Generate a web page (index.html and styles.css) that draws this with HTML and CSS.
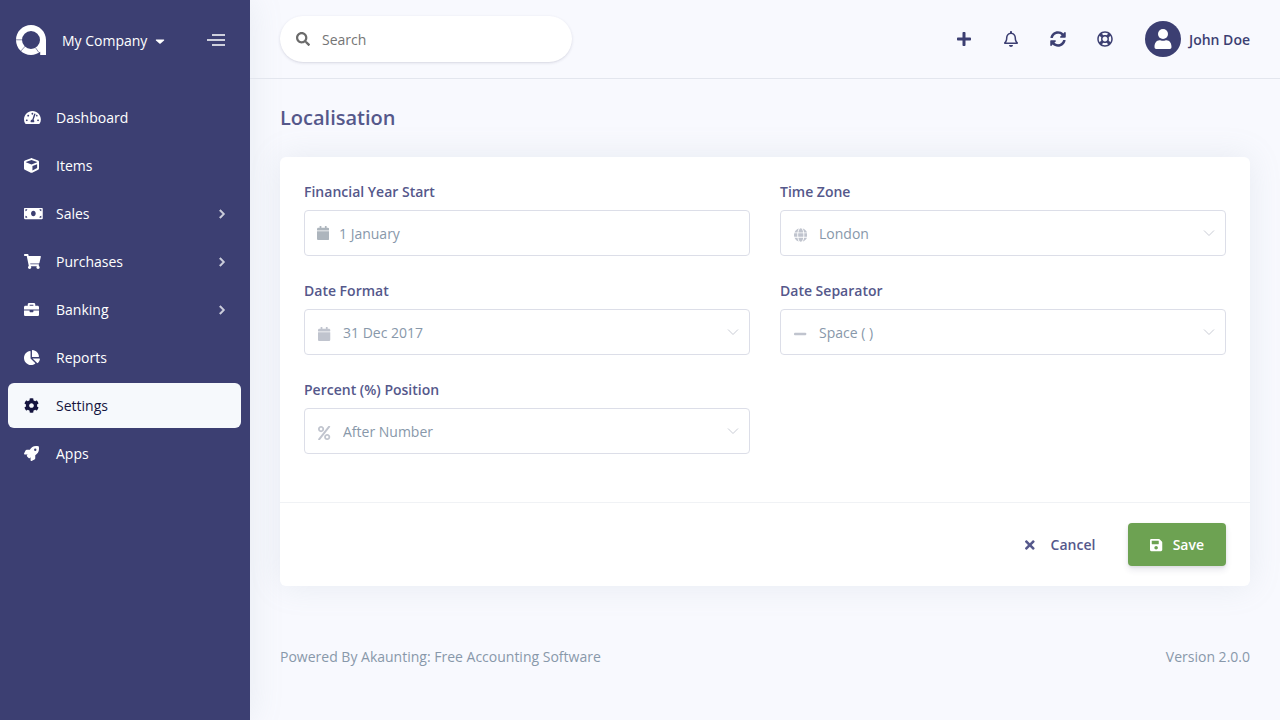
FILE: index.html
```html
<!DOCTYPE html>
<html lang="en-GB">
<head>
<meta charset="utf-8">
<meta name="viewport" content="width=device-width, initial-scale=1">
<title>Localisation</title>
<link rel="stylesheet" href="styles.css">
</head>
<body>
<div class="app">
  <aside class="sidebar">
    <div class="brand">
      <svg class="brand-logo" viewBox="0 0 30 30" aria-hidden="true">
        <path class="logo-fill" d="M15 0C6.700 0 0 6.700 0 15s6.700 15 15 15c3.500 0 6.700-1.200 9.200-3.200V30H30V15C30 6.700 23.300 0 15 0zm0 6a9 9 0 1 1 0 18 9 9 0 0 1 0-18z"/>
        <path class="logo-cut" d="M0 14.800h6M5 25.900l4.200-4.700M19.400 22.600l3.400 4.800"/>
      </svg>
      <button class="company" type="button">My Company
        <svg class="caret" viewBox="0 0 10 6" aria-hidden="true"><path d="M1.200 1.500h7.600q.8.300.2 1L5.600 5.600q-.6.500-1.200 0L1 2.500q-.6-.7.200-1z"/></svg>
      </button>
      <button class="toggler" type="button" aria-label="Toggle menu"><span class="bar bar-short"></span><span class="bar"></span><span class="bar bar-short"></span></button>
    </div>
    <nav class="menu">
      <a class="menu-item" href="#"><span class="menu-icon"><svg class="icon" viewBox="0 0 576 512"><path d="M288 32C128.940 32 0 160.940 0 320c0 52.800 14.250 102.260 39.060 144.800 5.610 9.620 16.300 15.200 27.440 15.200h443c11.140 0 21.830-5.580 27.440-15.200C561.750 422.260 576 372.800 576 320c0-159.060-128.940-288-288-288zm0 64c14.710 0 26.580 10.130 30.320 23.650-1.110 2.260-2.640 4.230-3.450 6.670l-9.220 27.670c-5.130 3.490-10.970 6.010-17.640 6.010-17.670 0-32-14.330-32-32S270.330 96 288 96zM96 384c-17.670 0-32-14.330-32-32s14.330-32 32-32 32 14.330 32 32-14.330 32-32 32zm48-160c-17.670 0-32-14.330-32-32s14.330-32 32-32 32 14.330 32 32-14.330 32-32 32zm246.770-72.410l-61.330 184C343.130 347.330 352 364.540 352 384c0 11.720-3.380 22.550-8.880 32H232.880c-5.500-9.450-8.880-20.280-8.880-32 0-33.940 26.500-61.430 59.900-63.590l61.340-184.010c4.170-12.560 17.730-19.450 30.360-15.170 12.570 4.190 19.350 17.790 15.170 30.360zm14.660 57.200l15.520-46.550c3.470-1.290 7.130-2.230 11.050-2.230 17.670 0 32 14.330 32 32s-14.330 32-32 32c-11.380-.01-20.890-6.280-26.570-15.220zM480 384c-17.670 0-32-14.330-32-32s14.330-32 32-32 32 14.330 32 32-14.330 32-32 32z"/></svg></span><span class="menu-label">Dashboard</span></a>
      <a class="menu-item" href="#"><span class="menu-icon"><svg class="icon" viewBox="0 0 512 512"><path d="M239.100 6.300l-208 78c-18.700 7-31.100 25-31.100 45v225.100c0 18.200 10.300 34.800 26.500 42.900l208 104c13.500 6.800 29.400 6.800 42.900 0l208-104c16.300-8.100 26.500-24.800 26.500-42.900V129.300c0-20-12.400-37.900-31.100-44.900l-208-78C262 2.200 250 2.200 239.100 6.300zM256 68.400l192 72v1.100l-192 78-192-78v-1.100l192-72zm32 356V275.500l160-65v133.900l-160 80z"/></svg></span><span class="menu-label">Items</span></a>
      <a class="menu-item" href="#"><span class="menu-icon"><svg class="icon" viewBox="0 0 640 512"><path d="M608 64H32C14.330 64 0 78.330 0 96v320c0 17.670 14.330 32 32 32h576c17.670 0 32-14.330 32-32V96c0-17.670-14.330-32-32-32zM48 400v-64c35.350 0 64 28.650 64 64H48zm0-224v-64h64c0 35.350-28.650 64-64 64zm272 176c-44.190 0-80-42.990-80-96 0-53.020 35.820-96 80-96s80 42.980 80 96c0 53.030-35.830 96-80 96zm272 48h-64c0-35.350 28.650-64 64-64v64zm0-224c-35.350 0-64-28.650-64-64h64v64z"/></svg></span><span class="menu-label">Sales</span><svg class="chevron" viewBox="0 0 320 512"><use href="#i-right"/></svg></a>
      <a class="menu-item" href="#"><span class="menu-icon"><svg class="icon" viewBox="0 0 576 512"><path d="M528.120 301.319l47.273-208C578.806 78.301 567.391 64 551.990 64H159.208l-9.166-44.810C147.758 8.021 137.930 0 126.529 0H24C10.745 0 0 10.745 0 24v16c0 13.255 10.745 24 24 24h69.883l70.248 343.435C147.325 417.100 136 435.222 136 456c0 30.928 25.072 56 56 56s56-25.072 56-56c0-15.674-6.447-29.835-16.824-40h209.647C430.447 426.165 424 440.326 424 456c0 30.928 25.072 56 56 56s56-25.072 56-56c0-22.172-12.888-41.332-31.579-50.405l5.517-24.276c3.413-15.018-8.002-29.319-23.403-29.319H218.117l-6.545-32h293.145c11.206 0 20.920-7.754 23.403-18.681z"/></svg></span><span class="menu-label">Purchases</span><svg class="chevron" viewBox="0 0 320 512"><use href="#i-right"/></svg></a>
      <a class="menu-item" href="#"><span class="menu-icon"><svg class="icon" viewBox="0 0 512 512"><path d="M320 336c0 8.840-7.160 16-16 16h-96c-8.840 0-16-7.160-16-16v-48H0v144c0 25.600 22.400 48 48 48h416c25.600 0 48-22.400 48-48V288H320v48zm144-208h-80V80c0-25.600-22.400-48-48-48H176c-25.600 0-48 22.400-48 48v48H48c-25.600 0-48 22.400-48 48v80h512v-80c0-25.600-22.400-48-48-48zm-144 0H192V96h128v32z"/></svg></span><span class="menu-label">Banking</span><svg class="chevron" viewBox="0 0 320 512"><use href="#i-right"/></svg></a>
      <a class="menu-item" href="#"><span class="menu-icon"><svg class="icon" viewBox="0 0 544 512"><path d="M527.790 288H290.500l158.030 158.030c6.040 6.040 15.980 6.530 22.190.68 38.700-36.460 65.320-85.610 73.130-140.860 1.340-9.460-6.510-17.850-16.060-17.850zm-15.830-64.800C503.720 103.740 408.260 8.280 288.800.04 279.680-.59 272 7.100 272 16.240V240h223.770c9.140 0 16.820-7.680 16.190-16.800zM224 288V50.710c0-9.550-8.390-17.400-17.840-16.060C86.990 51.490-4.100 155.600.14 280.370 4.500 408.510 114.830 513.590 243.030 511.980c50.400-.63 96.970-16.870 135.260-44.030 7.900-5.600 8.420-17.230 1.570-24.080L224 288z"/></svg></span><span class="menu-label">Reports</span></a>
      <a class="menu-item menu-item-active" href="#" aria-current="page"><span class="menu-icon"><svg class="icon" viewBox="0 0 512 512"><path d="M487.400 315.700l-42.600-24.600c4.300-23.200 4.300-47 0-70.200l42.600-24.600c4.900-2.800 7.100-8.600 5.500-14-11.100-35.600-30-67.800-54.700-94.600-3.800-4.100-10-5.100-14.800-2.300L380.800 110c-17.900-15.400-38.500-27.300-60.800-35.100V25.800c0-5.600-3.900-10.500-9.400-11.700-36.700-8.200-74.300-7.800-109.200 0-5.500 1.200-9.400 6.100-9.400 11.700V75c-22.200 7.900-42.800 19.800-60.800 35.100L88.700 85.500c-4.900-2.800-11-1.900-14.800 2.300-24.700 26.700-43.600 58.900-54.700 94.600-1.700 5.400.6 11.200 5.500 14L67.300 221c-4.300 23.200-4.300 47 0 70.200l-42.600 24.600c-4.900 2.800-7.100 8.600-5.500 14 11.100 35.600 30 67.800 54.700 94.600 3.800 4.100 10 5.100 14.800 2.300l42.600-24.600c17.900 15.400 38.500 27.300 60.800 35.100v49.200c0 5.600 3.900 10.500 9.400 11.700 36.700 8.200 74.300 7.800 109.200 0 5.500-1.200 9.400-6.100 9.400-11.700v-49.200c22.200-7.900 42.800-19.800 60.800-35.100l42.600 24.600c4.900 2.800 11 1.900 14.800-2.300 24.700-26.700 43.600-58.900 54.700-94.600 1.500-5.500-.7-11.300-5.600-14.100zM256 336c-44.100 0-80-35.900-80-80s35.900-80 80-80 80 35.900 80 80-35.900 80-80 80z"/></svg></span><span class="menu-label">Settings</span></a>
      <a class="menu-item" href="#"><span class="menu-icon"><svg class="icon" viewBox="0 0 512 512"><path d="M505.120 19.094c-1.189-5.531-6.658-11-12.207-12.188C460.716 0 435.507 0 410.407 0 307.175 0 245.269 55.203 199.052 128H94.838c-16.348.016-35.557 11.875-42.887 26.484L2.516 253.297A28.400 28.400 0 0 0 0 264a24.009 24.009 0 0 0 24.006 24h103.810l-22.474 22.469c-11.365 11.361-12.996 32.258 0 45.250l50.904 50.906c11.156 11.188 32.156 13.156 45.277 0l22.475-22.469V488a24.009 24.009 0 0 0 24.006 24 28.559 28.559 0 0 0 10.707-2.516l98.728-49.390c14.629-7.297 26.508-26.500 26.508-42.860V312.797c72.598-46.313 128.035-108.406 128.035-211.094C512.075 76.500 512.075 51.297 505.120 19.094zM384.040 168A40 40 0 1 1 424.050 128a40.023 40.023 0 0 1-40.010 40z"/></svg></span><span class="menu-label">Apps</span></a>
    </nav>
  </aside>

  <div class="main">
    <header class="topbar">
      <label class="search">
        <svg class="icon search-icon" viewBox="0 0 512 512" aria-hidden="true"><path d="M505 442.700L405.300 343c-4.500-4.500-10.600-7-17-7H372c27.600-35.300 44-79.700 44-128C416 93.100 322.900 0 208 0S0 93.100 0 208s93.100 208 208 208c48.300 0 92.700-16.400 128-44v16.300c0 6.400 2.500 12.500 7 17l99.700 99.700c9.400 9.400 24.600 9.400 33.900 0l28.300-28.300c9.400-9.400 9.400-24.600.1-34zM208 336c-70.700 0-128-57.200-128-128 0-70.700 57.200-128 128-128 70.700 0 128 57.200 128 128 0 70.700-57.200 128-128 128z"/></svg>
        <input class="search-input" type="text" placeholder="Search" aria-label="Search">
      </label>
      <div class="tools">
        <button class="tool" type="button" aria-label="Add"><svg class="icon tool-icon" viewBox="0 0 448 512"><path d="M416 208H272V64c0-17.670-14.330-32-32-32h-32c-17.670 0-32 14.330-32 32v144H32c-17.670 0-32 14.330-32 32v32c0 17.670 14.330 32 32 32h144v144c0 17.670 14.330 32 32 32h32c17.670 0 32-14.330 32-32V304h144c17.670 0 32-14.330 32-32v-32c0-17.670-14.330-32-32-32z"/></svg></button>
        <button class="tool" type="button" aria-label="Notifications"><svg class="icon tool-icon" viewBox="0 0 448 512"><path d="M439.390 362.290c-19.320-20.760-55.470-51.990-55.470-154.290 0-77.700-54.480-139.900-127.940-155.160V32c0-17.670-14.320-32-31.980-32s-31.980 14.330-31.980 32v20.840C118.560 68.100 64.080 130.300 64.080 208c0 102.300-36.150 133.530-55.470 154.290-6 6.450-8.660 14.160-8.610 21.710.11 16.400 12.980 32 32.100 32h383.800c19.120 0 32-15.600 32.100-32 .05-7.550-2.610-15.270-8.610-21.710zM67.530 368c21.220-27.970 44.420-74.330 44.530-159.420 0-.2-.06-.38-.06-.58 0-61.860 50.140-112 112-112s112 50.140 112 112c0 .2-.06.380-.06.580.11 85.100 23.310 131.460 44.530 159.420H67.530zM224 512c35.320 0 63.970-28.650 63.970-64H160.030c0 35.350 28.650 64 63.970 64z"/></svg></button>
        <button class="tool" type="button" aria-label="Updates"><svg class="icon tool-icon" viewBox="0 0 512 512"><path d="M370.720 133.280C339.458 104.008 298.888 87.962 255.848 88c-77.458.068-144.328 53.178-162.791 126.850-1.344 5.363-6.122 9.150-11.651 9.150H24.103c-7.498 0-13.194-6.807-11.807-14.176C33.933 94.924 134.813 8 256 8c66.448 0 126.791 26.136 171.315 68.685L463.030 40.970C478.149 25.851 504 36.559 504 57.941V192c0 13.255-10.745 24-24 24H345.941c-21.382 0-32.090-25.851-16.971-40.971l41.750-41.749zM32 296h134.059c21.382 0 32.090 25.851 16.971 40.971l-41.750 41.750c31.262 29.273 71.835 45.319 114.876 45.280 77.418-.07 144.315-53.144 162.787-126.849 1.344-5.363 6.122-9.150 11.651-9.150h57.304c7.498 0 13.194 6.807 11.807 14.176C478.067 417.076 377.187 504 256 504c-66.448 0-126.791-26.136-171.315-68.685L48.970 471.030C33.851 486.149 8 475.441 8 454.059V320c0-13.255 10.745-24 24-24z"/></svg></button>
        <button class="tool" type="button" aria-label="Help"><svg class="icon tool-icon" viewBox="0 0 512 512"><path d="M256 504c136.967 0 248-111.033 248-248S392.967 8 256 8 8 119.033 8 256s111.033 248 248 248zm-103.398-76.720l53.411-53.411c31.806 13.506 68.128 13.522 99.974 0l53.411 53.411c-63.217 38.319-143.579 38.319-206.796 0zM336 256c0 44.112-35.888 80-80 80s-80-35.888-80-80 35.888-80 80-80 80 35.888 80 80zm91.280 103.398l-53.411-53.411c13.505-31.806 13.522-68.128 0-99.974l53.411-53.411c38.319 63.217 38.319 143.579 0 206.796zM359.397 84.720l-53.411 53.411c-31.806-13.505-68.128-13.522-99.973 0L152.602 84.720c63.217-38.319 143.579-38.319 206.795 0zM84.720 152.602l53.411 53.411c-13.506 31.806-13.522 68.128 0 99.974L84.720 359.398c-38.319-63.217-38.319-143.579 0-206.796z"/></svg></button>
        <button class="user" type="button">
          <svg class="avatar" viewBox="0 0 36 36" aria-hidden="true"><circle class="avatar-bg" cx="18" cy="18" r="18"/><circle class="avatar-fg" cx="18" cy="13" r="5"/><path class="avatar-fg" d="M9.500 26c0-3.900 2-6.700 5-6.700 1 0 1.800.5 3.500.5s2.500-.5 3.500-.5c3 0 5 2.800 5 6.700 0 1.300-.7 2-1.700 2H11.200c-1 0-1.700-.7-1.700-2z"/></svg>
          John Doe
        </button>
      </div>
    </header>

    <main class="content">
      <h1 class="title">Localisation</h1>
      <form class="card">
        <div class="fields">
          <div class="field">
            <label class="label" for="year">Financial Year Start</label>
            <div class="control control-date">
              <svg class="icon control-icon" viewBox="0 0 448 512" aria-hidden="true"><use href="#i-calendar"/></svg>
              <input class="input" id="year" type="text" value="1 January">
            </div>
          </div>
          <div class="field">
            <label class="label" for="zone">Time Zone</label>
            <div class="control">
              <svg class="icon control-icon" viewBox="0 0 496 512" aria-hidden="true"><path d="M336.500 160C322 70.700 287.800 8 248 8s-74 62.700-88.500 152h177zM152 256c0 22.200 1.200 43.500 3.300 64h185.300c2.100-20.500 3.300-41.800 3.300-64s-1.200-43.500-3.300-64H155.300c-2.100 20.500-3.300 41.800-3.300 64zm324.700-96c-28.600-67.900-86.500-120.400-158-141.600 24.400 33.800 41.200 84.700 50 141.600h108zM177.200 18.400C105.800 39.600 47.800 92.100 19.300 160h108c8.700-56.900 25.500-107.800 49.900-141.600zM487.400 192H372.700c2.100 21 3.300 42.500 3.300 64s-1.200 43-3.300 64h114.600c5.500-20.500 8.600-41.800 8.600-64s-3.100-43.500-8.500-64zM120 256c0-21.500 1.200-43 3.300-64H8.600C3.200 212.500 0 233.800 0 256s3.200 43.500 8.600 64h114.600c-2-21-3.200-42.500-3.200-64zm39.500 96c14.500 89.300 48.700 152 88.500 152s74-62.700 88.500-152h-177zm159.300 141.600c71.400-21.200 129.400-73.700 158-141.600h-108c-8.800 56.900-25.600 107.800-50 141.600zM19.300 352c28.600 67.900 86.500 120.400 158 141.600-24.400-33.800-41.200-84.700-50-141.600h-108z"/></svg>
              <select class="input select" id="zone"><option>London</option></select>
              <svg class="down" viewBox="0 0 12 8" aria-hidden="true"><use href="#i-down"/></svg>
            </div>
          </div>
          <div class="field">
            <label class="label" for="format">Date Format</label>
            <div class="control">
              <svg class="icon control-icon" viewBox="0 0 448 512" aria-hidden="true"><use href="#i-calendar"/></svg>
              <select class="input select" id="format"><option>31 Dec 2017</option></select>
              <svg class="down" viewBox="0 0 12 8" aria-hidden="true"><use href="#i-down"/></svg>
            </div>
          </div>
          <div class="field">
            <label class="label" for="separator">Date Separator</label>
            <div class="control">
              <svg class="icon control-icon" viewBox="0 0 448 512" aria-hidden="true"><path d="M416 208H32c-17.670 0-32 14.330-32 32v32c0 17.670 14.330 32 32 32h384c17.670 0 32-14.330 32-32v-32c0-17.670-14.330-32-32-32z"/></svg>
              <select class="input select" id="separator"><option>Space ( )</option></select>
              <svg class="down" viewBox="0 0 12 8" aria-hidden="true"><use href="#i-down"/></svg>
            </div>
          </div>
          <div class="field">
            <label class="label" for="percent">Percent (%) Position</label>
            <div class="control">
              <svg class="icon control-icon" viewBox="0 0 448 512" aria-hidden="true"><path d="M112 224c61.900 0 112-50.100 112-112S173.900 0 112 0 0 50.100 0 112s50.100 112 112 112zm0-160c26.500 0 48 21.500 48 48s-21.500 48-48 48-48-21.500-48-48 21.500-48 48-48zm224 224c-61.900 0-112 50.100-112 112s50.100 112 112 112 112-50.100 112-112-50.100-112-112-112zm0 160c-26.500 0-48-21.500-48-48s21.500-48 48-48 48 21.500 48 48-21.500 48-48 48zM392.300.2l31.600-.1c19.400-.1 30.900 21.800 19.700 37.800L77.400 501.600a23.950 23.950 0 0 1-19.600 10.200l-33.400.1c-19.500 0-30.900-21.900-19.700-37.800l368-463.700C377.200 4 384.500.2 392.300.2z"/></svg>
              <select class="input select" id="percent"><option>After Number</option></select>
              <svg class="down" viewBox="0 0 12 8" aria-hidden="true"><use href="#i-down"/></svg>
            </div>
          </div>
        </div>
        <div class="actions">
          <button class="btn btn-cancel" type="button"><svg class="icon btn-icon" viewBox="0 0 352 512" aria-hidden="true"><path d="M242.720 256l100.070-100.070c12.280-12.280 12.280-32.190 0-44.480l-22.240-22.240c-12.280-12.280-32.190-12.280-44.480 0L176 189.280 75.930 89.210c-12.280-12.280-32.190-12.280-44.480 0L9.210 111.450c-12.280 12.280-12.280 32.190 0 44.480L109.280 256 9.210 356.070c-12.280 12.280-12.280 32.190 0 44.480l22.240 22.240c12.280 12.280 32.200 12.280 44.480 0L176 322.720l100.070 100.070c12.280 12.280 32.200 12.280 44.480 0l22.240-22.240c12.280-12.280 12.280-32.190 0-44.480L242.720 256z"/></svg>Cancel</button>
          <button class="btn btn-save" type="submit"><svg class="icon btn-icon" viewBox="0 0 448 512" aria-hidden="true"><path d="M433.941 129.941l-83.882-83.882A48 48 0 0 0 316.118 32H48C21.490 32 0 53.490 0 80v352c0 26.510 21.490 48 48 48h352c26.510 0 48-21.490 48-48V163.882a48 48 0 0 0-14.059-33.941zM224 416c-35.346 0-64-28.654-64-64 0-35.346 28.654-64 64-64s64 28.654 64 64c0 35.346-28.654 64-64 64zm96-304.520V212c0 6.627-5.373 12-12 12H76c-6.627 0-12-5.373-12-12V108c0-6.627 5.373-12 12-12h228.520c3.183 0 6.235 1.264 8.485 3.515l3.480 3.480A11.996 11.996 0 0 1 320 111.480z"/></svg>Save</button>
        </div>
      </form>
      <footer class="footer">
        <span>Powered By Akaunting: <a class="footer-link" href="#">Free Accounting Software</a></span>
        <span>Version 2.0.0</span>
      </footer>
    </main>
  </div>
</div>
<svg class="defs" aria-hidden="true">
  <defs>
    <path id="i-right" d="M285.476 272.971L91.132 467.314c-9.373 9.373-24.569 9.373-33.941 0l-22.667-22.667c-9.357-9.357-9.375-24.522-.04-33.901L188.505 256 34.484 101.255c-9.335-9.379-9.317-24.544.04-33.901l22.667-22.667c9.373-9.373 24.569-9.373 33.941 0L285.475 239.030c9.373 9.372 9.373 24.568.001 33.941z"/>
    <path id="i-calendar" d="M12 192h424c6.600 0 12 5.400 12 12v260c0 26.500-21.500 48-48 48H48c-26.500 0-48-21.500-48-48V204c0-6.600 5.400-12 12-12zm436-44v-36c0-26.500-21.500-48-48-48h-48V12c0-6.600-5.400-12-12-12h-40c-6.600 0-12 5.400-12 12v52H160V12c0-6.600-5.400-12-12-12h-40c-6.600 0-12 5.400-12 12v52H48C21.500 64 0 85.500 0 112v36c0 6.600 5.400 12 12 12h424c6.600 0 12-5.400 12-12z"/>
    <path id="i-down" d="M1 1.500l5 5 5-5"/>
  </defs>
</svg>
</body>
</html>
```
FILE: styles.css
```css
* { box-sizing: border-box; }

body {
  margin: 0;
  background: #f8f9fe;
  color: #8898aa;
  font-family: "Open Sans", "Noto Sans", sans-serif;
  font-size: 14px;
  line-height: 21px;
}

button, input, select { font: inherit; }
button { padding: 0; border: 0; background: none; color: inherit; cursor: pointer; }
a { color: inherit; text-decoration: none; }

.app { display: flex; min-height: 100vh; }
.icon { display: block; height: 14px; fill: currentColor; }
.defs { display: none; }

/* Sidebar */
.sidebar {
  flex: 0 0 250px;
  background: #3c3f72;
  color: #fff;
  box-shadow: 0 0 32px rgba(136, 152, 170, 0.15);
}
.brand { display: flex; align-items: center; padding: 25px 25px 40px 16px; }
.brand-logo { width: 30px; height: 30px; margin-right: 16px; }
.logo-fill { fill: #fff; }
.logo-cut { fill: none; stroke: #3c3f72; stroke-width: 0.600; }
.company { display: flex; align-items: center; gap: 8px; }
.caret { width: 10px; height: 6px; margin-top: 2px; fill: #fff; }
.toggler { display: grid; gap: 3px; justify-items: end; margin-left: auto; }
.bar { width: 18px; height: 2px; background: #ced0dd; }
.bar-short { width: 13px; }

.menu { display: grid; gap: 3px; padding: 0 9px 0 8px; }
.menu-item { display: flex; align-items: center; padding: 12px 16px; border-radius: 6px; }
.menu-item-active { background: #f6f9fc; color: #15153f; }
.menu-icon { width: 32px; }
.menu .icon { height: 15px; }
.menu-label { flex: 1; }
.chevron { height: 10px; fill: #ced0dd; stroke: #ced0dd; stroke-width: 28; }

/* Top bar */
.main { flex: 1; min-width: 0; }
.topbar {
  display: flex;
  justify-content: space-between;
  align-items: center;
  padding: 16px 30px;
  border-bottom: 1px solid #e3e6ee;
}
.search {
  display: flex;
  align-items: center;
  gap: 12px;
  width: 292px;
  height: 46px;
  padding: 0 16px;
  border-radius: 32px;
  background: #fff;
  color: #6b6b6b;
  box-shadow: 0 1px 3px rgba(50, 50, 93, 0.15), 0 1px 0 rgba(0, 0, 0, 0.02);
}
.search-icon { flex: none; }
.search-input { width: 100%; min-width: 0; padding: 0; border: 0; outline: 0; background: none; }
.search-input::placeholder { color: #757575; }
.tools { display: flex; align-items: center; color: #3c3f72; }
.tool { display: grid; place-items: center; width: 47px; }
.tool-icon { height: 16px; }
.user { display: flex; align-items: center; gap: 8px; margin-left: 16px; font-weight: 600; }
.avatar { width: 36px; height: 36px; }
.avatar-bg { fill: #3c3f72; }
.avatar-fg { fill: #fff; }

/* Page */
.content { padding: 24px 30px; }
.title { margin: 0 0 24px; color: #55588b; font-size: 20px; line-height: 30px; font-weight: 600; }
.card { border-radius: 6px; background: #fff; box-shadow: 0 0 32px rgba(136, 152, 170, 0.15); }
.fields { display: grid; grid-template-columns: 1fr 1fr; gap: 24px 30px; padding: 24px 24px 48px; }
.label { display: block; margin-bottom: 8px; color: #55588b; font-weight: 600; }
.control { display: grid; grid-template-columns: 38px 1fr 34px; align-items: center; color: #c0c4ce; }
.control > * { grid-row: 1; }
.control-icon { grid-column: 1; justify-self: center; z-index: 1; margin: 3px 0 0 3px; pointer-events: none; }
.input {
  grid-column: 1 / -1;
  width: 100%;
  height: 46px;
  padding: 0 34px 0 38px;
  border: 1px solid #dcdee8;
  border-radius: 4px;
  outline: 0;
  background: #fff;
  color: #8898aa;
}
.control-date { color: #adb5bd; }
.control-date .control-icon { margin: 0; }
.control-date .input { padding-left: 34px; }
.select { appearance: none; }
.down { grid-column: 3; justify-self: center; z-index: 1; width: 12px; fill: none; stroke: #c9ccd5; pointer-events: none; }

.actions {
  display: flex;
  justify-content: flex-end;
  gap: 11px;
  padding: 20px 24px;
  border-top: 1px solid #f0f2f5;
}
.btn {
  display: flex;
  align-items: center;
  gap: 10px;
  padding: 11px 22px;
  border-radius: 4px;
  color: #55588b;
  font-weight: 600;
}
.btn-cancel { gap: 16px; }
.btn-save {
  background: #6da252;
  color: #fff;
  box-shadow: 0 4px 6px rgba(50, 50, 93, 0.11), 0 1px 3px rgba(0, 0, 0, 0.08);
}

.footer { display: flex; flex-wrap: wrap; justify-content: space-between; padding: 60px 0 24px; }
```
